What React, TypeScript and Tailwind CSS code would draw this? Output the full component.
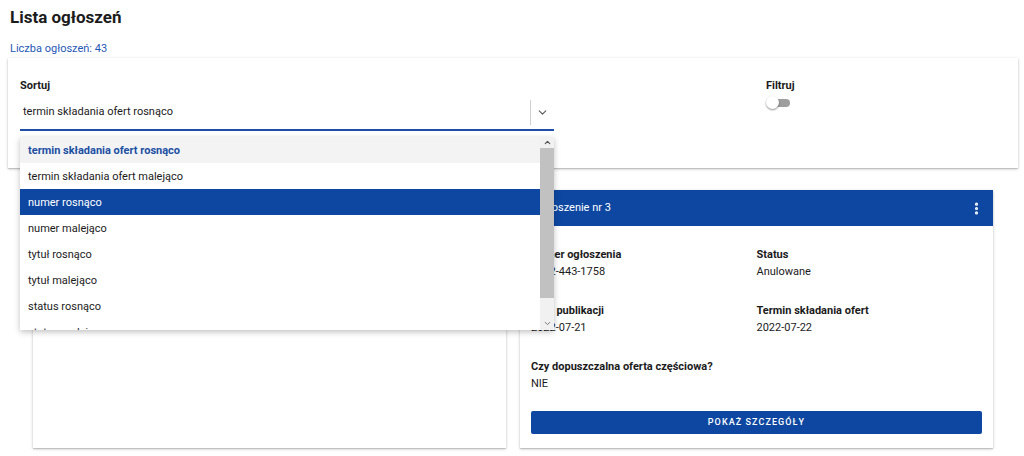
import { ChevronDown, ChevronUp, EllipsisVertical } from 'lucide-react';
import clsx from 'clsx';

const sortOptions = [
    'termin składania ofert rosnąco',
    'termin składania ofert malejąco',
    'numer rosnąco',
    'numer malejąco',
    'tytuł rosnąco',
    'tytuł malejąco',
    'status rosnąco',
    'status malejąco',
];

function Field({ label, value }: { label: string; value: string }) {
    return (
        <div>
            <div className="text-[11px] leading-[16px] font-bold text-[#1b1b1b]">{label}</div>
            <div className="mt-[1px] text-[11px] leading-[16px] text-[#1b1b1b]">{value}</div>
        </div>
    );
}

function SortSelect() {
    return (
        <div className="relative w-[534px]">
            {/* Trigger */}
            <div className="flex h-[36px] items-center border-b-2 border-[#1d4fa6]">
                <span className="flex-1 pl-[3px] text-[11px] text-[#1b1b1b]">termin składania ofert rosnąco</span>
                <div className="flex h-[25px] w-[24px] items-center justify-center border-l border-[#d0d0d0]">
                    <ChevronDown size={13} strokeWidth={2} className="text-[#555]" />
                </div>
            </div>

            {/* Open list */}
            <div className="absolute left-0 top-[42px] z-20 flex h-[193px] w-[534px] overflow-hidden bg-white shadow-[0_2px_6px_rgba(0,0,0,0.25)]">
                <div className="flex-1">
                    {sortOptions.map((opt, i) => (
                        <div
                            key={opt}
                            className={clsx(
                                'flex h-[26px] items-center pl-[8px] pt-[2px] text-[11px]',
                                i === 0 && 'bg-[#f3f3f3] font-bold text-[#1b4fa3]',
                                i === 2 && 'bg-[#0e47a1] text-white',
                                i !== 0 && i !== 2 && 'text-[#1b1b1b]'
                            )}
                        >
                            {opt}
                        </div>
                    ))}
                </div>
                {/* Scrollbar */}
                <div className="flex w-[14px] flex-col bg-[#f1f1f1]">
                    <div className="flex h-[11px] items-center justify-center">
                        <ChevronUp size={9} strokeWidth={3} className="text-[#505050]" />
                    </div>
                    <div className="h-[150px] bg-[#c1c1c1]" />
                    <div className="flex-1" />
                    <div className="flex h-[14px] items-center justify-center">
                        <ChevronDown size={9} strokeWidth={2.5} className="text-[#707070]" />
                    </div>
                </div>
            </div>
        </div>
    );
}

function NoticeCard({ title, hidden }: { title: string; hidden?: boolean }) {
    return (
        <div className="flex h-[258px] flex-col bg-white shadow-[0_1px_3px_rgba(0,0,0,0.22),0_1px_1px_rgba(0,0,0,0.12)]">
            <div className="flex h-[38px] items-center justify-between bg-[#0e47a1] pl-[15px] pr-[9px]">
                <span className="text-[11px] text-white">{title}</span>
                <EllipsisVertical size={15} strokeWidth={3} className="text-white" />
            </div>
            {hidden ? (
                <div className="mx-[11px] mt-[99px] h-[2px] bg-[#5b87cc]" />
            ) : (
                <div className="flex flex-1 flex-col px-[11px] pb-[14px] pt-[21px]">
                    <div className="grid grid-cols-2 gap-y-[23px]">
                        <Field label="Numer ogłoszenia" value="2022-443-1758" />
                        <Field label="Status" value="Anulowane" />
                        <Field label="Data publikacji" value="2022-07-21" />
                        <Field label="Termin składania ofert" value="2022-07-22" />
                    </div>
                    <div className="mt-[23px]">
                        <Field label="Czy dopuszczalna oferta częściowa?" value="NIE" />
                    </div>
                    <button className="mt-[19px] h-[23px] w-full rounded-[2px] bg-[#0e47a1] text-[9px] font-medium tracking-[0.12em] text-white">
                        POKAŻ SZCZEGÓŁY
                    </button>
                </div>
            )}
        </div>
    );
}

export default function App() {
    return (
        <div className="min-h-[456px] bg-white px-[8px] pt-[5px] font-['Roboto',sans-serif] text-[#1b1b1b]">
            <h1 className="pl-[2px] text-[17px] font-bold leading-[24px]">Lista ogłoszeń</h1>
            <div className="mt-[13px] pl-[2px] text-[11px] leading-[14px] text-[#1f58b5]">Liczba ogłoszeń: 43</div>

            {/* Filter card */}
            <div className="relative z-10 mt-[2px] flex h-[110px] w-[1010px] bg-white px-[12px] pt-[20px] shadow-[0_1px_3px_rgba(0,0,0,0.22),0_1px_1px_rgba(0,0,0,0.12)]">
                <div>
                    <div className="text-[11px] font-bold leading-[16px]">Sortuj</div>
                    <div className="mt-[1px]">
                        <SortSelect />
                    </div>
                </div>
                <div className="ml-[212px]">
                    <div className="text-[11px] font-bold leading-[16px]">Filtruj</div>
                    <div className="relative mt-[2px] h-[14px] w-[26px]">
                        <div className="absolute left-[5px] top-[3px] h-[8px] w-[19px] rounded-full bg-[#9e9e9e]" />
                        <div className="absolute left-0 top-0 h-[13px] w-[13px] rounded-full bg-white shadow-[0_1px_2px_rgba(0,0,0,0.45)]" />
                    </div>
                </div>
            </div>

            {/* Cards */}
            <div className="ml-[25px] mt-[22px] grid w-[960px] grid-cols-2 gap-[14px]">
                <NoticeCard title="Ogłoszenie nr 2" hidden />
                <NoticeCard title="Ogłoszenie nr 3" />
            </div>
        </div>
    );
}
